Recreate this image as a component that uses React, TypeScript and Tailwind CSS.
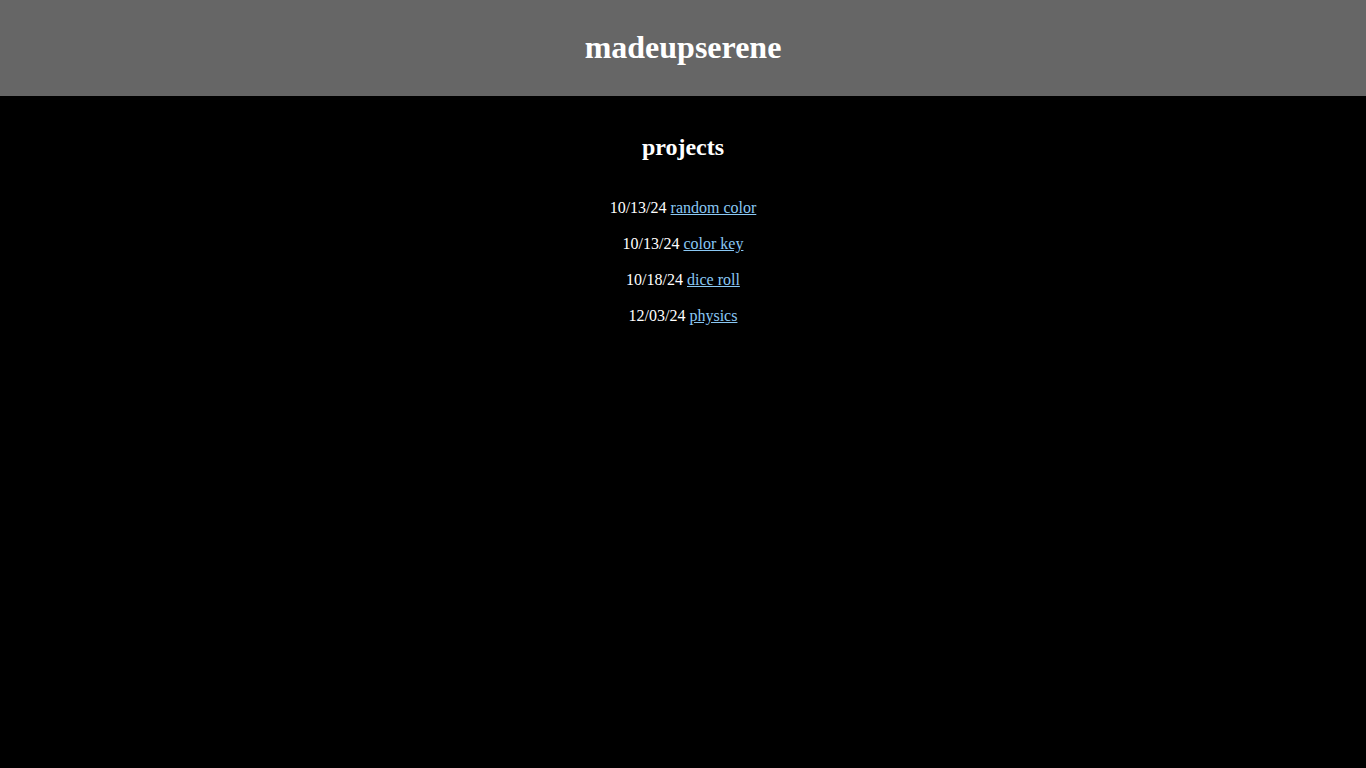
const PROJECTS = [
    { date: '10/13/24', name: 'random color' },
    { date: '10/13/24', name: 'color key' },
    { date: '10/18/24', name: 'dice roll' },
    { date: '12/03/24', name: 'physics' },
]

export default function App() {
    return (
        <div className="min-h-screen bg-black text-white font-['Liberation_Serif',serif]">
            <header className="h-24 bg-[#666666] flex items-center justify-center">
                <h1 className="text-[32px] font-bold leading-[37px] -mt-[2px]">madeupserene</h1>
            </header>
            <main className="flex flex-col items-center">
                <h2 className="mt-[37px] text-2xl font-bold leading-7">projects</h2>
                <div className="mt-[37px] flex flex-col items-center gap-4">
                    {PROJECTS.map(p => (
                        <p key={p.name} className="text-base leading-5">
                            {p.date}{' '}
                            <a href="#" className="text-[#8ac8f4] underline">{p.name}</a>
                        </p>
                    ))}
                </div>
            </main>
        </div>
    )
}
